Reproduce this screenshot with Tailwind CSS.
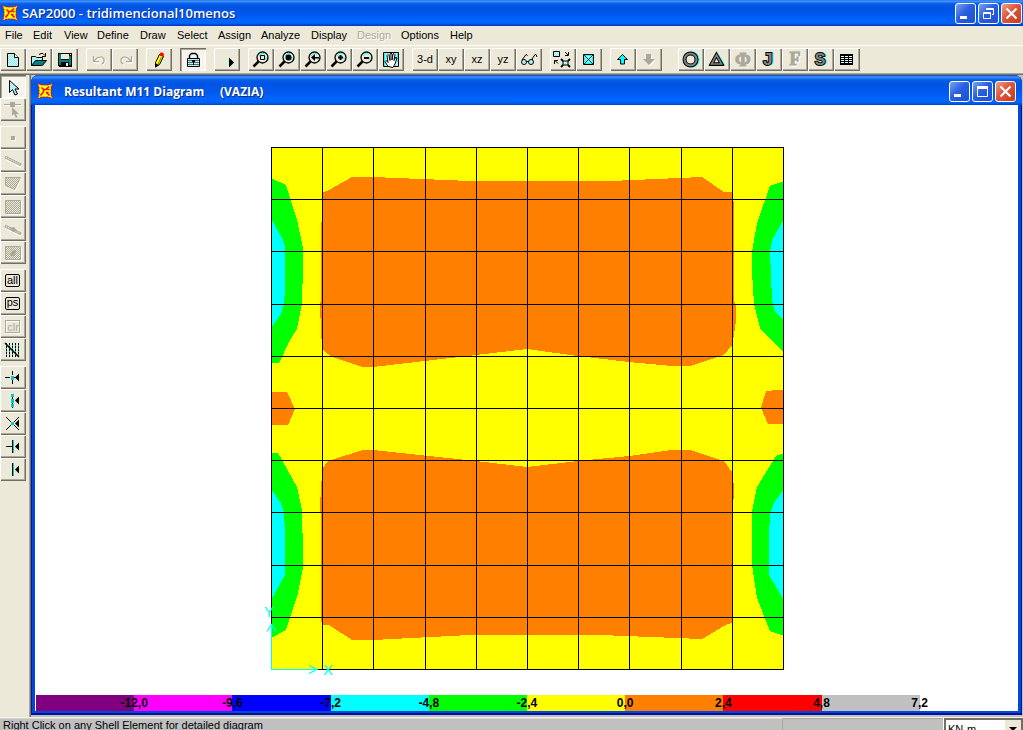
<!DOCTYPE html>
<html lang="pt">
<head>
<meta charset="utf-8">
<title>SAP2000 - tridimencional10menos</title>
<script src="https://cdn.jsdelivr.net/npm/@tailwindcss/browser@4"></script>
</head>
<body class="h-screen overflow-hidden flex flex-col bg-[#ece9d8] text-black text-[11px] leading-[13px] font-['Liberation_Sans',Arial,sans-serif]">

<svg width="0" height="0" class="absolute" aria-hidden="true">
  <defs>
    <pattern id="cy" width="2" height="2" patternUnits="userSpaceOnUse"><rect width="2" height="2" fill="#e4ffff"/><path d="M0 0h1v1H0zM1 1h1v1H1z" fill="#7ff0f0"/></pattern>
    <pattern id="gy" width="2" height="2" patternUnits="userSpaceOnUse"><rect width="2" height="2" fill="#ece9d8"/><path d="M0 0h1v1H0zM1 1h1v1H1z" fill="#aca899"/></pattern>
    <symbol id="app" viewBox="0 0 16 16">
      <path d="M.5.500l4 1.500h7l4-1.500L14 4.500v7l1.500 4-4-1.500h-7l-4 1.500L2 11.500v-7z" fill="#ff0" stroke="#f00" stroke-dasharray="2 1"/>
      <path d="M4.500 4.500l2 2M12 3.500l-3 3M9.500 9.500l3 3M6 9.500l-2.500 3M6.500 6.500h3M6.500 6.500v3M9 9.500h2.500M10.500 6.500h2" stroke="#f00" stroke-width="1.500" fill="none"/>
    </symbol>
    <symbol id="lens" viewBox="0 0 26 23">
      <circle cx="14.500" cy="9.500" r="5.500" fill="#ece9d8" stroke="#000" stroke-width="1.3"/>
      <path d="M11 8l3-3 3 1M18 9v3" stroke="#0ff" fill="none"/>
      <path d="M10.500 13.500L5.500 18.500" stroke="#000" stroke-width="2.500"/>
    </symbol>
    <symbol id="tri" viewBox="0 0 26 23"><path d="M19 8v8l-4-4z" fill="#000"/></symbol>
  </defs>
</svg>

<header class="flex h-[26px] shrink-0 items-center gap-1 pl-0.5 pr-px bg-[linear-gradient(180deg,#2a7cf0_0,#3c90ff_6%,#0a5ce8_14%,#0054e3_30%,#0058ee_55%,#0066ff_80%,#0062f5_90%,#0040c8_96%,#0038b0_100%)]">
  <svg class="size-4"><use href="#app"/></svg>
  <h1 class="flex-1 whitespace-nowrap text-[13px] leading-4 font-semibold text-white font-['Open_Sans',sans-serif] [text-shadow:1px_1px_0_#0a2a80]">SAP2000 - tridimencional10menos</h1>
  <div class="flex gap-0.5">
    <button aria-label="Minimize" class="size-[21px] rounded-[3px] border border-white bg-[linear-gradient(135deg,#7ba2ef,#2a5fe0_45%,#1c4fd8)]"><svg viewBox="0 0 19 19" class="size-[19px]"><path d="M4 12h7v3H4z" fill="#fff"/></svg></button>
    <button aria-label="Restore" class="size-[21px] rounded-[3px] border border-white bg-[linear-gradient(135deg,#7ba2ef,#2a5fe0_45%,#1c4fd8)]"><svg viewBox="0 0 19 19" class="size-[19px]"><path d="M7.500 6V4.500h7v6H13M7 5.500h8" fill="none" stroke="#fff"/><path d="M4.500 8.500h7v6h-7zM4 9.500h8" fill="none" stroke="#fff"/></svg></button>
    <button aria-label="Close" class="size-[21px] rounded-[3px] border border-white bg-[linear-gradient(135deg,#f0a088,#e0553a_45%,#c83c18)]"><svg viewBox="0 0 19 19" class="size-[19px]"><path d="M4.500 4.500l10 10M14.500 4.500l-10 10" stroke="#fff" stroke-width="2.200"/></svg></button>
  </div>
</header>

<nav class="grid h-5 shrink-0 grid-cols-[28px_31px_33px_43px_37px_41px_43px_50px_46px_44px_49px_auto] items-center border-b border-white pl-[5px]">
  <a href="#">File</a><a href="#">Edit</a><a href="#">View</a><a href="#">Define</a><a href="#">Draw</a><a href="#">Select</a><a href="#">Assign</a><a href="#">Analyze</a><a href="#">Display</a><a href="#" class="text-[#aca899] [text-shadow:1px_1px_0_#fff]">Design</a><a href="#">Options</a><a href="#">Help</a>
</nav>

<div role="toolbar" class="flex h-[29px] shrink-0 gap-2 border-b border-[#716f64] pt-0.5 shadow-[inset_0_-1px_0_#aca899]
 [&_button]:block [&_button]:h-[23px] [&_button]:w-[26px] [&_button]:shadow-[inset_1px_1px_0_#fff,inset_-1px_-1px_0_#716f64,inset_-2px_-2px_0_#aca899] [&_svg]:h-[23px] [&_svg]:w-[26px]">
  <div class="flex">
    <button aria-label="New"><svg viewBox="0 0 26 23"><path d="M7.500 5.500h7l4 4v9h-11z" fill="url(#cy)" stroke="#000"/><path d="M14.500 5.500v4h4" fill="#fff" stroke="#000"/></svg></button>
    <button aria-label="Open"><svg viewBox="0 0 26 23"><path d="M5.500 17.500v-9h4l1 1h6v3" fill="url(#cy)" stroke="#000"/><path d="M5.500 17.500l4-5h11l-4 5z" fill="#008080" stroke="#000"/><path d="M13 6.500l2-1h2l2 2M19.500 5v3.500H16" fill="none" stroke="#000"/></svg></button>
    <button aria-label="Save"><svg viewBox="0 0 26 23" shape-rendering="crispEdges"><path d="M6 5h14v14H7l-1-1z" fill="#000"/><path d="M7 6h2v11H7zM17 8h2v9h-2zM8 12h10v2H8z" fill="#008080"/><path d="M9 6h8v5H9z" fill="#ece9d8"/><path d="M9 14h8v4H9z" fill="#000"/><path d="M14 15h2v3h-2zM18 6h1v1h-1z" fill="#ece9d8"/></svg></button>
  </div>
  <div class="flex">
    <button aria-label="Undo" disabled><svg viewBox="0 0 26 23" fill="none"><path d="M8.500 9v6h6M9 14l3-3 3-1h2l2 2v3l-2 2" stroke="#fff"/><path d="M7.500 8v5.500h5.500M8 13l3-3 3-1h2l2 2v3l-2 2" stroke="#aca899" stroke-width="1.200"/></svg></button>
    <button aria-label="Redo" disabled><svg viewBox="0 0 26 23" fill="none"><path d="M20.500 9v6h-6M20 14l-3-3-3-1h-2l-2 2v3l2 2" stroke="#fff"/><path d="M19.500 8v5.500h-5.500M19 13l-3-3-3-1h-2l-2 2v3l2 2" stroke="#aca899" stroke-width="1.200"/></svg></button>
  </div>
  <button aria-label="Edit"><svg viewBox="0 0 26 23"><path d="M9.500 14.500l4-8 4 2-4 8-4 2.500z" fill="#ff0" stroke="#000"/><path d="M13.500 7l1-2.500h2l1.500 1.500-.5 3z" fill="#f00"/><path d="M15.500 9l-3.500 7" stroke="#808000"/><path d="M9 15l4 2-4 2.500z" fill="#000"/></svg></button>
  <button aria-label="Lock model" aria-pressed="true" class="bg-[#f6f4ec] shadow-[inset_1px_1px_0_#716f64,inset_2px_2px_0_#aca899,inset_-1px_-1px_0_#fff]!"><svg viewBox="0 0 26 23"><path d="M9.500 10V7.500l2-2h4l2 2V10" fill="none" stroke="#000" stroke-width="1.400"/><path d="M7.500 10.500h12v8h-12z" fill="url(#cy)" stroke="#000"/><path d="M8 12.500h11M8 14.500h11M8 16.500h11" stroke="#444" stroke-width=".8"/><path d="M12 12h3v2h-1v3h-1v-3h-1z" fill="#000"/></svg></button>
  <button aria-label="Run"><svg viewBox="0 0 26 23"><path d="M15 9.500l5 5-5 5z" fill="#000"/><path d="M14.500 10v8" stroke="#9ff" /></svg></button>
  <div class="flex">
    <button aria-label="Rubber band zoom"><svg viewBox="0 0 26 23"><use href="#lens"/><path d="M12.500 7.500h4v4h-4z" fill="#ece9d8" stroke="#000"/></svg></button>
    <button aria-label="Restore full view"><svg viewBox="0 0 26 23"><use href="#lens"/><circle cx="14.500" cy="9.500" r="3" /></svg></button>
    <button aria-label="Previous zoom"><svg viewBox="0 0 26 23"><use href="#lens"/><path d="M11 9.500l4-3.500v7zM14 9h5v1.500h-5z"/></svg></button>
    <button aria-label="Zoom in"><svg viewBox="0 0 26 23"><use href="#lens"/><path d="M12 9.500h5M14.500 7v5" stroke="#000" stroke-width="2"/></svg></button>
    <button aria-label="Zoom out"><svg viewBox="0 0 26 23"><use href="#lens"/><path d="M12 10h5" stroke="#000" stroke-width="2"/></svg></button>
    <button aria-label="Pan"><svg viewBox="0 0 26 23"><path d="M5.500 4.500h15v14h-15z" fill="url(#cy)" stroke="#000"/><path d="M6.500 5v13M19.500 5v9" stroke="#0ff"/><path d="M10 18.500l-3-5 1-1 2 2-1-7 1-1 1 1 1 5V6l1-1 1 1v6l1-6 1-.5 1 1-1 6 2-3.500 1 1-2 6-2 3.500z" fill="#fff" stroke="#000"/></svg></button>
  </div>
  <div class="flex">
    <button>3-d</button><button>xy</button><button>xz</button><button>yz</button>
    <button aria-label="Perspective"><svg viewBox="0 0 26 23"><circle cx="8" cy="14" r="2.500" fill="url(#cy)" stroke="#000"/><circle cx="15" cy="14" r="2.500" fill="url(#cy)" stroke="#000"/><path d="M6 12l4-5.500 1.500 1M10.500 13.500h2M17 12l-1-1 3-4.500h1l1 2.500" fill="none" stroke="#000"/></svg></button>
  </div>
  <div class="flex">
    <button aria-label="Shrink elements"><svg viewBox="0 0 26 23"><path d="M3.500 3.500h6v5h-6z" fill="url(#cy)" stroke="#000"/><path d="M13 13h5v4h-5z" fill="url(#cy)" stroke="#000"/><path d="M11 11l2 2M20 11l-2 2M11 19l2-2M20 19l-2-2" stroke="#000" stroke-width="1.800"/><path d="M15 4l3 3M18.500 4v3.500H15M8 15.500l-3-3M4.500 16v-3.500H8" fill="none" stroke="#000"/></svg></button>
    <button aria-label="Set elements"><svg viewBox="0 0 26 23"><path d="M7.500 6.500h10v10h-10z" fill="#7ff" stroke="#000"/><path d="M8 7l9 9M17 7l-9 9" stroke="#000" stroke-width=".8"/><path d="M9 7.500h7M8.500 9v5M16.500 9v5M9 15.500h7" stroke="#0ff"/></svg></button>
  </div>
  <div class="flex">
    <button aria-label="Up one gridline"><svg viewBox="0 0 26 23"><path d="M12.500 6.500l5 5h-3v4.500h-4v-4.500h-3z" fill="#0ff" stroke="#000"/></svg></button>
    <button aria-label="Down one gridline" disabled><svg viewBox="0 0 26 23"><path d="M14 18l-5.500-5.500h3V8h5v4.500h3z" fill="#fff"/><path d="M13 17l-6-6h3V6h5v5h4z" fill="#aca899"/></svg></button>
  </div>
  <div class="ml-2 flex">
    <button aria-label="Joints"><svg viewBox="0 0 26 23" fill="none"><circle cx="13.500" cy="11.500" r="6.500" stroke="#0ff" stroke-width="3"/><circle cx="12.500" cy="11.500" r="6" stroke="#000" stroke-width="4"/><circle cx="12.500" cy="11.500" r="6" stroke="#808080" stroke-width="2"/></svg></button>
    <button aria-label="Deformed shape"><svg viewBox="0 0 26 23"><path d="M14 5l7 12h-3z" fill="#0ff"/><path d="M12.500 7l5 9h-10z" fill="none" stroke="#000" stroke-width="3.600"/><path d="M12.500 7l5 9h-10z" fill="none" stroke="#808080" stroke-width="1.600"/><path d="M5 17.500h15" stroke="#000"/></svg></button>
    <button aria-label="Mode shape" disabled><svg viewBox="0 0 26 23" font-family="Liberation Serif" font-weight="bold" font-size="19" text-anchor="middle"><text x="14" y="19" fill="#fff">Φ</text><text x="13" y="18" fill="#aca899" stroke="#aca899">Φ</text></svg></button>
    <button aria-label="Joint reactions"><svg viewBox="0 0 26 23" font-family="Liberation Mono" font-weight="bold" font-size="18" text-anchor="middle"><text x="13" y="17" fill="#0ff" stroke="#0ff">J</text><text x="12" y="17" fill="#808080" stroke="#000" stroke-width="1.800" paint-order="stroke">J</text></svg></button>
    <button aria-label="Forces" disabled><svg viewBox="0 0 26 23" font-family="Liberation Serif" font-weight="bold" font-size="18" text-anchor="middle"><text x="14" y="18" fill="#fff" stroke="#fff">F</text><text x="13" y="17" fill="#aca899" stroke="#aca899">F</text></svg></button>
    <button aria-label="Stresses"><svg viewBox="0 0 26 23" font-family="Liberation Sans" font-weight="bold" font-size="16" text-anchor="middle"><text x="13" y="17" fill="#0ff" stroke="#0ff">S</text><text x="12" y="17" fill="#808080" stroke="#000" stroke-width="1.800" paint-order="stroke">S</text></svg></button>
    <button aria-label="Tables"><svg viewBox="0 0 26 23" shape-rendering="crispEdges"><path d="M6 6h13v11H6z"/><path d="M7 8h3v1H7zM11 8h3v1h-3zM15 8h3v1h-3zM7 10h3v1H7zM11 10h3v1h-3zM15 10h3v1h-3zM7 12h3v1H7zM11 12h3v1h-3zM15 12h3v1h-3zM7 14h3v1H7zM11 14h3v1h-3zM15 14h3v1h-3z" fill="#dff"/></svg></button>
  </div>
</div>

<div class="flex min-h-0 flex-1">
  <div role="toolbar" class="flex w-[31px] shrink-0 flex-col gap-[5px] border-r border-[#716f64] shadow-[inset_-1px_0_0_#aca899]
   [&_button]:block [&_button]:h-[23px] [&_button]:w-[26px] [&_button]:shadow-[inset_1px_1px_0_#fff,inset_-1px_-1px_0_#716f64,inset_-2px_-2px_0_#aca899] [&_svg]:h-[23px] [&_svg]:w-[26px]">
    <div>
      <button aria-label="Pointer" aria-pressed="true" class="bg-[#f6f4ec] shadow-[inset_1px_1px_0_#716f64,inset_2px_2px_0_#aca899,inset_-1px_-1px_0_#fff]!"><svg viewBox="0 0 26 23"><path d="M9.500 5.500v12l3-3 2.500 5.500 2.500-1-2.500-5h4z" fill="url(#cy)" stroke="#000"/></svg></button>
      <button aria-label="Reshaper" disabled><svg viewBox="0 0 26 23"><path d="M5 7.500h17M13 10v9" stroke="#fff"/><path d="M4 6.500h17" stroke="#aca899"/><path d="M10 4h5v5h-5zM12 9v9l2-2 2 4 1.500-1-1.500-3h3z" fill="#aca899"/></svg></button>
    </div>
    <div>
      <button aria-label="Joint" disabled><svg viewBox="0 0 26 23"><path d="M12 11h4v4h-4z" fill="#fff"/><path d="M11 10h4v4h-4z" fill="#aca899"/></svg></button>
      <button aria-label="Frame" disabled><svg viewBox="0 0 26 23"><path d="M6 9.500l15 8" stroke="#fff" stroke-width="3"/><path d="M5 8l16 8" stroke="#aca899" stroke-width="3"/><path d="M6 8.500l14 7" stroke="#ece9d8" stroke-width="1.300" stroke-dasharray="1 1"/></svg></button>
      <button aria-label="Shell" disabled><svg viewBox="0 0 26 23"><path d="M6.500 6.500h15l-6 12-9-4z" stroke="#fff" fill="none"/><path d="M5.500 5.500h15l-6 12-9-4z" fill="url(#gy)" stroke="#aca899"/></svg></button>
      <button aria-label="Rectangular shell" disabled><svg viewBox="0 0 26 23"><path d="M6.500 6.500h15v13h-15z" stroke="#fff" fill="none"/><path d="M5.500 5.500h15v13h-15z" fill="url(#gy)" stroke="#aca899"/></svg></button>
      <button aria-label="Quick frame" disabled><svg viewBox="0 0 26 23"><path d="M6 9.500l15 8" stroke="#fff" stroke-width="3"/><path d="M5 8l16 8" stroke="#aca899" stroke-width="3"/><path d="M6 8.500l14 7" stroke="#ece9d8" stroke-width="1.300" stroke-dasharray="1 1"/><path d="M10 10l4-1 3 4-4 1z" fill="#aca899"/></svg></button>
      <button aria-label="Quick shell" disabled><svg viewBox="0 0 26 23"><path d="M6.500 6.500h15v13h-15z" stroke="#fff" fill="none"/><path d="M5.500 5.500h15v13h-15z" fill="url(#gy)" stroke="#aca899"/><path d="M10 13l3-4 4 1-3 5h-3z" fill="#aca899"/></svg></button>
    </div>
    <div>
      <button aria-label="Select all"><svg viewBox="0 0 26 23"><rect x="5.500" y="5.500" width="14" height="12" rx="1.500" fill="none" stroke="#000"/><text x="12.500" y="15" font-size="11" text-anchor="middle">all</text></svg></button>
      <button aria-label="Previous selection"><svg viewBox="0 0 26 23"><rect x="5.500" y="5.500" width="14" height="12" rx="1.500" fill="none" stroke="#000"/><text x="12.500" y="14" font-size="11" text-anchor="middle">ps</text></svg></button>
      <button aria-label="Clear selection" disabled><svg viewBox="0 0 26 23"><rect x="6.500" y="6.500" width="14" height="12" fill="none" stroke="#fff"/><rect x="5.500" y="5.500" width="14" height="12" fill="none" stroke="#aca899"/><text x="13" y="16" font-size="11" text-anchor="middle" fill="#aca899">clr</text></svg></button>
      <button aria-label="Intersecting line"><svg viewBox="0 0 26 23"><path d="M6.500 5v14M9.500 5v14M12.500 5v14M15.500 5v14M18.500 5v14" stroke="#0cc"/><path d="M6.500 5v14M9.500 5v14M12.500 5v14M15.500 5v14M18.500 5v14" stroke="#000" stroke-dasharray="2 1"/><path d="M5 5l14 14" stroke="#000" stroke-width="1.500"/></svg></button>
    </div>
    <div>
      <button aria-label="Snap to joints"><svg viewBox="0 0 26 23"><path d="M5 11.500h5M12.500 5v4M12.500 14v4M14 11.500h2" stroke="#000"/><path d="M11 10h3v4h-3z" fill="#0cc"/><use href="#tri" y="-.5"/></svg></button>
      <button aria-label="Snap to midpoints"><svg viewBox="0 0 26 23"><path d="M12.500 5v14" stroke="#000"/><path d="M11 5h3v3h-3zM11 10h3v4h-3zM11 15h3v3h-3z" fill="#0cc"/><use href="#tri" y="-.5"/></svg></button>
      <button aria-label="Snap to intersections"><svg viewBox="0 0 26 23"><path d="M6 5l13 13M19 5L6 18" stroke="#000"/><path d="M11 10h3v3h-3z" fill="#0cc"/><use href="#tri" y="-.5"/></svg></button>
      <button aria-label="Snap perpendicular"><svg viewBox="0 0 26 23"><path d="M6 11.500h7M12.500 5v13" stroke="#000"/><path d="M13.500 5v13" stroke="#0cc"/><use href="#tri" y="-.5"/></svg></button>
      <button aria-label="Snap to lines"><svg viewBox="0 0 26 23"><path d="M12.500 5v13" stroke="#000"/><path d="M13.500 5v13" stroke="#0cc"/><use href="#tri" y="-.5"/></svg></button>
    </div>
  </div>

  <div class="flex min-w-0 flex-1 bg-[#c0c0c0] pr-px">
    <section class="mb-0.5 flex min-w-0 flex-1 flex-col rounded-t-lg bg-[#0046e0] px-1 pb-1 shadow-[inset_1px_0_0_#0019a8,inset_-1px_0_0_#00138c,inset_0_-2px_0_#00138c]">
      <header class="-mx-1 flex h-[30px] shrink-0 items-center gap-[11px] rounded-t-lg pt-0.5 pl-1.5 pr-1.5 bg-[linear-gradient(180deg,#0a50d0_0,#3c90ff_7%,#0a5ce8_16%,#0054e3_30%,#0058ee_55%,#0066ff_82%,#0062f5_92%,#0040c8_100%)]">
        <svg class="size-4"><use href="#app"/></svg>
        <h2 class="flex-1 whitespace-pre pt-0.5 text-[12px] leading-4 font-bold text-white font-['Open_Sans',sans-serif] [text-shadow:1px_1px_0_#0a2a80]">Resultant M11 Diagram     (VAZIA)</h2>
        <div class="flex gap-0.5">
          <button aria-label="Minimize" class="size-[21px] rounded-[3px] border border-white bg-[linear-gradient(135deg,#7ba2ef,#2a5fe0_45%,#1c4fd8)]"><svg viewBox="0 0 19 19" class="size-[19px]"><path d="M4 12h7v3H4z" fill="#fff"/></svg></button>
          <button aria-label="Maximize" class="size-[21px] rounded-[3px] border border-white bg-[linear-gradient(135deg,#7ba2ef,#2a5fe0_45%,#1c4fd8)]"><svg viewBox="0 0 19 19" class="size-[19px]"><path d="M4.500 5v9.500h10V5M4 5.500h11" fill="none" stroke="#fff"/><path d="M4 4h11v3H4z" fill="#fff"/></svg></button>
          <button aria-label="Close" class="size-[21px] rounded-[3px] border border-white bg-[linear-gradient(135deg,#f0a088,#e0553a_45%,#c83c18)]"><svg viewBox="0 0 19 19" class="size-[19px]"><path d="M4.500 4.500l10 10M14.500 4.500l-10 10" stroke="#fff" stroke-width="2.200"/></svg></button>
        </div>
      </header>

      <div class="flex min-h-0 flex-1 flex-col bg-white">
        <svg class="min-h-0 w-full flex-1" viewBox="35 105 983 590" preserveAspectRatio="xMidYMid meet" role="img" aria-label="M11 contour diagram">
          <g shape-rendering="crispEdges">
            <path d="M271 147h513v523H271z" fill="#ff0"/>
            <g fill="#0f0">
              <path d="M271 178l15 7 11 35 6 28v35l-1 1v20l-5 25-7 11-11 23h-8z"/>
              <path d="M784 181l-14 5-13 37-5 29v20l2 32 6 24 24 25z"/>
              <path d="M271 453h7l19 34 5 23v23l1 1v34l-6 29-11 33-15 8z"/>
              <path d="M784 453l-8 3-19 31-5 25v53l5 33 13 33 14 5z"/>
            </g>
            <g fill="#0ff">
              <path d="M271 218l12 22 2 7v43l-1 15-3 9-10 14z"/>
              <path d="M784 219l-12 21-2 12 2 48 3 12 9 9z"/>
              <path d="M271 489l10 14 3 9 1 21v42l-14 25z"/>
              <path d="M784 489l-10 14-4 12-1 20v40l15 25z"/>
            </g>
            <g fill="#ff8000">
              <path d="M322 193l7-3 23-13h21l97 4h140l92-4 22 15h8v9h2v100l2 4v16l-2 13-2 11-8 10-34 11h-18l-43-4-51-6-51-7-51 6-103 12h-10l-31-10-8-6-2-5-1-14-1-29 1-2v-49z"/>
              <path d="M322 625h7l23 15h21l97-5h130l102 4 22-13 9-4V512l1-25-2-15-8-11-34-11h-18l-43 6-51 5-51 6-51-6-103-11h-10l-35 11-5 7-2 17-1 25 1 5v103z"/>
              <path d="M271 392h16l8 17-7 16h-17zM784 390h-6l-12 1-5 17 7 16h16z"/>
            </g>
            <path d="M271.500 147v523M322.500 147v523M373.500 147v523M425.500 147v523M476.500 147v523M527.500 147v523M578.500 147v523M629.500 147v523M681.500 147v523M732.500 147v523M783.500 147v523M271 147.500h513M271 199.500h513M271 251.500h513M271 304.500h513M271 356.500h513M271 408.500h513M271 460.500h513M271 512.500h513M271 565.500h513M271 617.500h513M271 669.500h513" stroke="#000"/>
            <path d="M271.500 624v45.500H317" stroke="#0ff" fill="none"/>
          </g>
          <path d="M267 631.500l4.500-7 4.500 7M309 665.500l8 4-8 4" stroke="#0ff" fill="none" stroke-width="1.300"/>
          <g fill="#0ff" font-size="15" text-anchor="middle"><text x="269" y="617">Y</text><text x="328" y="675">X</text></g>
        </svg>
        <div class="ml-px flex h-4 w-[calc(90%-1px)] shrink-0 text-[12px] leading-4 font-bold [&>div]:flex [&>div]:flex-1 [&>div]:justify-end [&_span]:translate-x-1/2">
          <div class="bg-[#800080]"><span>-12,0</span></div>
          <div class="bg-[#ff00ff]"><span>-9,6</span></div>
          <div class="bg-[#0000ff]"><span>-7,2</span></div>
          <div class="bg-[#00ffff]"><span>-4,8</span></div>
          <div class="bg-[#00ff00]"><span>-2,4</span></div>
          <div class="bg-[#ffff00]"><span>0,0</span></div>
          <div class="bg-[#ff8000]"><span>2,4</span></div>
          <div class="bg-[#ff0000]"><span>4,8</span></div>
          <div class="bg-[#c0c0c0]"><span>7,2</span></div>
        </div>
      </div>
    </section>
  </div>
</div>

<footer class="flex h-[13px] shrink-0 overflow-hidden border-t border-[#f4f2ea] bg-[#c0c0c0]">
  <p class="min-w-0 flex-1 border-r border-t border-r-[#aca899] border-t-[#d8d6cc] pl-[3px] whitespace-nowrap">Right Click on any Shell Element for detailed diagram</p>
  <div class="w-40 border-t border-[#aca899]"></div>
  <div class="relative w-20 shrink-0 border-l border-white">
    <select aria-label="Units" class="block h-[22px] w-[79px] appearance-none border-2 border-[#716f64] bg-white pl-0.5 text-[11px] leading-4"><option>KN-m</option></select>
    <svg class="pointer-events-none absolute top-0.5 right-0.5 h-4 w-4 bg-[#ece9d8]" viewBox="0 0 16 16"><path d="M4 7h8l-4 4z"/></svg>
  </div>
</footer>
</body>
</html>
